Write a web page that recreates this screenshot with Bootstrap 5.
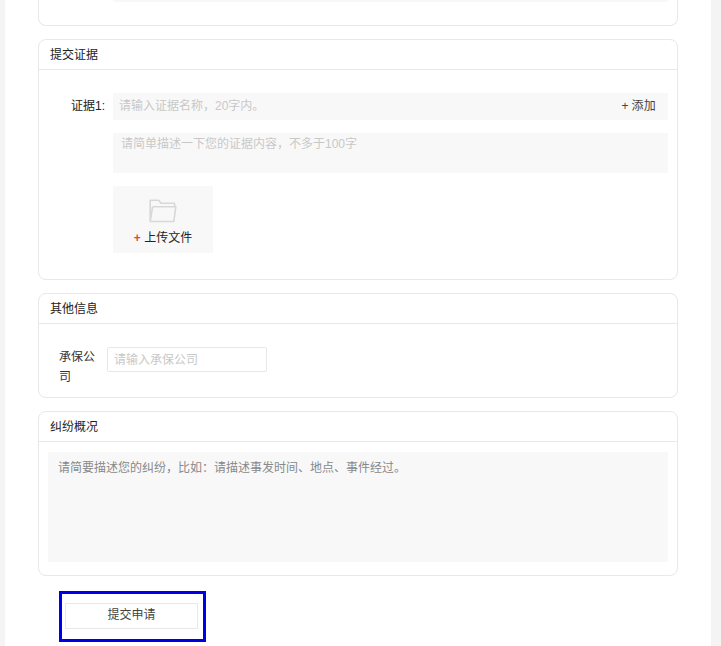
<!DOCTYPE html>
<html lang="zh-CN">
<head>
  <meta charset="UTF-8">
  <title>提交申请</title>
  <link href="https://cdn.jsdelivr.net/npm/bootstrap@5.3.3/dist/css/bootstrap.min.css" rel="stylesheet">
  <style>
    html, body { height: 646px; overflow: hidden; }
    body {
      background: #f4f4f4;
      font-family: "Liberation Sans", "Noto Sans CJK SC", sans-serif;
      font-size: 12px;
      color: #333;
    }
    .page-sheet {
      width: 706px;
      height: 646px;
      margin-left: 5px;
      background: #fff;
      padding: 0 33px;
      overflow: hidden;
    }
    .panel {
      border: 1px solid #e8e8e8;
      border-radius: 8px;
      margin-bottom: 13px;
      width: 640px;
    }
    .panel-top {
      height: 26px;
      border-top: 0;
      border-radius: 0 0 8px 8px;
      padding-left: 74px;
      padding-right: 9px;
    }
    .panel-top div { height: 2px; background: #f8f8f8; }
    .panel-head {
      height: 30px;
      line-height: 31px;
      padding-left: 11px;
      border-bottom: 1px solid #e8e8e8;
      color: #222;
    }
    .evidence-body { height: 209px; padding: 23px 9px 0 32px; }
    .ev-label { width: 42px; padding-right: 8px; line-height: 27px; color: #222; text-align: right; white-space: nowrap; }
    .ev-fields { width: 555px; }
    .ev-name {
      height: 27px;
      background: #f8f8f8;
      padding: 0 12px 0 6px;
      line-height: 27px;
      color: #c8c8c8;
    }
    .ev-add { color: #444; letter-spacing: .3px; word-spacing: -1px; }
    .ev-desc {
      height: 40px;
      margin-top: 13px;
      background: #f8f8f8;
      padding: 2px 8px;
      line-height: 18px;
      color: #c8c8c8;
    }
    .upload-box {
      width: 100px;
      height: 67px;
      margin-top: 13px;
      background: #f8f8f8;
      padding-top: 13px;
      color: #222;
    }
    .upload-box svg { display: block; }
    .upload-text { line-height: 16px; margin-top: 7px; }
    .upload-plus { color: #ee4035; font-weight: 700; }
    .other-body { height: 73px; padding: 23px 0 0 20px; }
    .other-label { width: 38px; line-height: 20px; color: #333; }
    .other-input {
      width: 160px;
      height: 25px;
      margin-left: 10px;
      border: 1px solid #e8e8e8;
      border-radius: 2px;
      padding-left: 6px;
      line-height: 24px;
      color: #c8c8c8;
    }
    .brief-body { height: 133px; padding: 10px 9px 0 9px; }
    .brief-box {
      height: 110px;
      background: #f8f8f8;
      padding: 8px 10px;
      line-height: 16px;
      color: #888;
    }
    .submit-wrap {
      width: 147px;
      height: 51px;
      margin: 15px 0 0 21px;
      border: 3px solid #0000e6;
      padding: 9px 3px 0 3px;
    }
    .submit-btn {
      width: 133px;
      height: 26px;
      border: 1px solid #e8e8e8;
      border-radius: 0;
      padding: 0 0 2px;
      background: #fff;
      color: #444;
      font-size: 12px;
      line-height: 20px;
    }
  </style>
</head>
<body>

<div class="page-sheet">

  <div class="panel panel-top"><div></div></div>

  <!-- 提交证据 -->
  <div class="panel">
    <div class="panel-head">提交证据</div>
    <div class="evidence-body d-flex">
      <div class="ev-label">证据1:</div>
      <div class="ev-fields">
        <div class="ev-name d-flex justify-content-between">
          <span>请输入证据名称，20字内。</span>
          <span class="ev-add">+ 添加</span>
        </div>
        <div class="ev-desc">请简单描述一下您的证据内容，不多于100字</div>
        <div class="upload-box text-center">
          <svg class="mx-auto" width="28" height="24" viewBox="0 0 28 24" fill="none" stroke="#d8d8d8" stroke-width="1.6" stroke-linejoin="round">
            <path d="M1.2 22.5V1.2h8.5l2.3 3h13.6v3.5"/>
            <path d="M1.2 22.5h23.6l2-14.8H3.6"/>
            <path d="M3.6 7.7 1.2 22.5"/>
          </svg>
          <div class="upload-text"><span class="upload-plus">+</span> 上传文件</div>
        </div>
      </div>
    </div>
  </div>

  <!-- 其他信息 -->
  <div class="panel">
    <div class="panel-head">其他信息</div>
    <div class="other-body d-flex">
      <div class="other-label">承保公司</div>
      <div class="other-input">请输入承保公司</div>
    </div>
  </div>

  <!-- 纠纷概况 -->
  <div class="panel">
    <div class="panel-head">纠纷概况</div>
    <div class="brief-body">
      <div class="brief-box">请简要描述您的纠纷，比如：请描述事发时间、地点、事件经过。</div>
    </div>
  </div>

  <div class="submit-wrap">
    <button type="button" class="btn submit-btn d-block">提交申请</button>
  </div>

</div>

<script src="https://cdn.jsdelivr.net/npm/bootstrap@5.3.3/dist/js/bootstrap.bundle.min.js"></script>
</body>
</html>
